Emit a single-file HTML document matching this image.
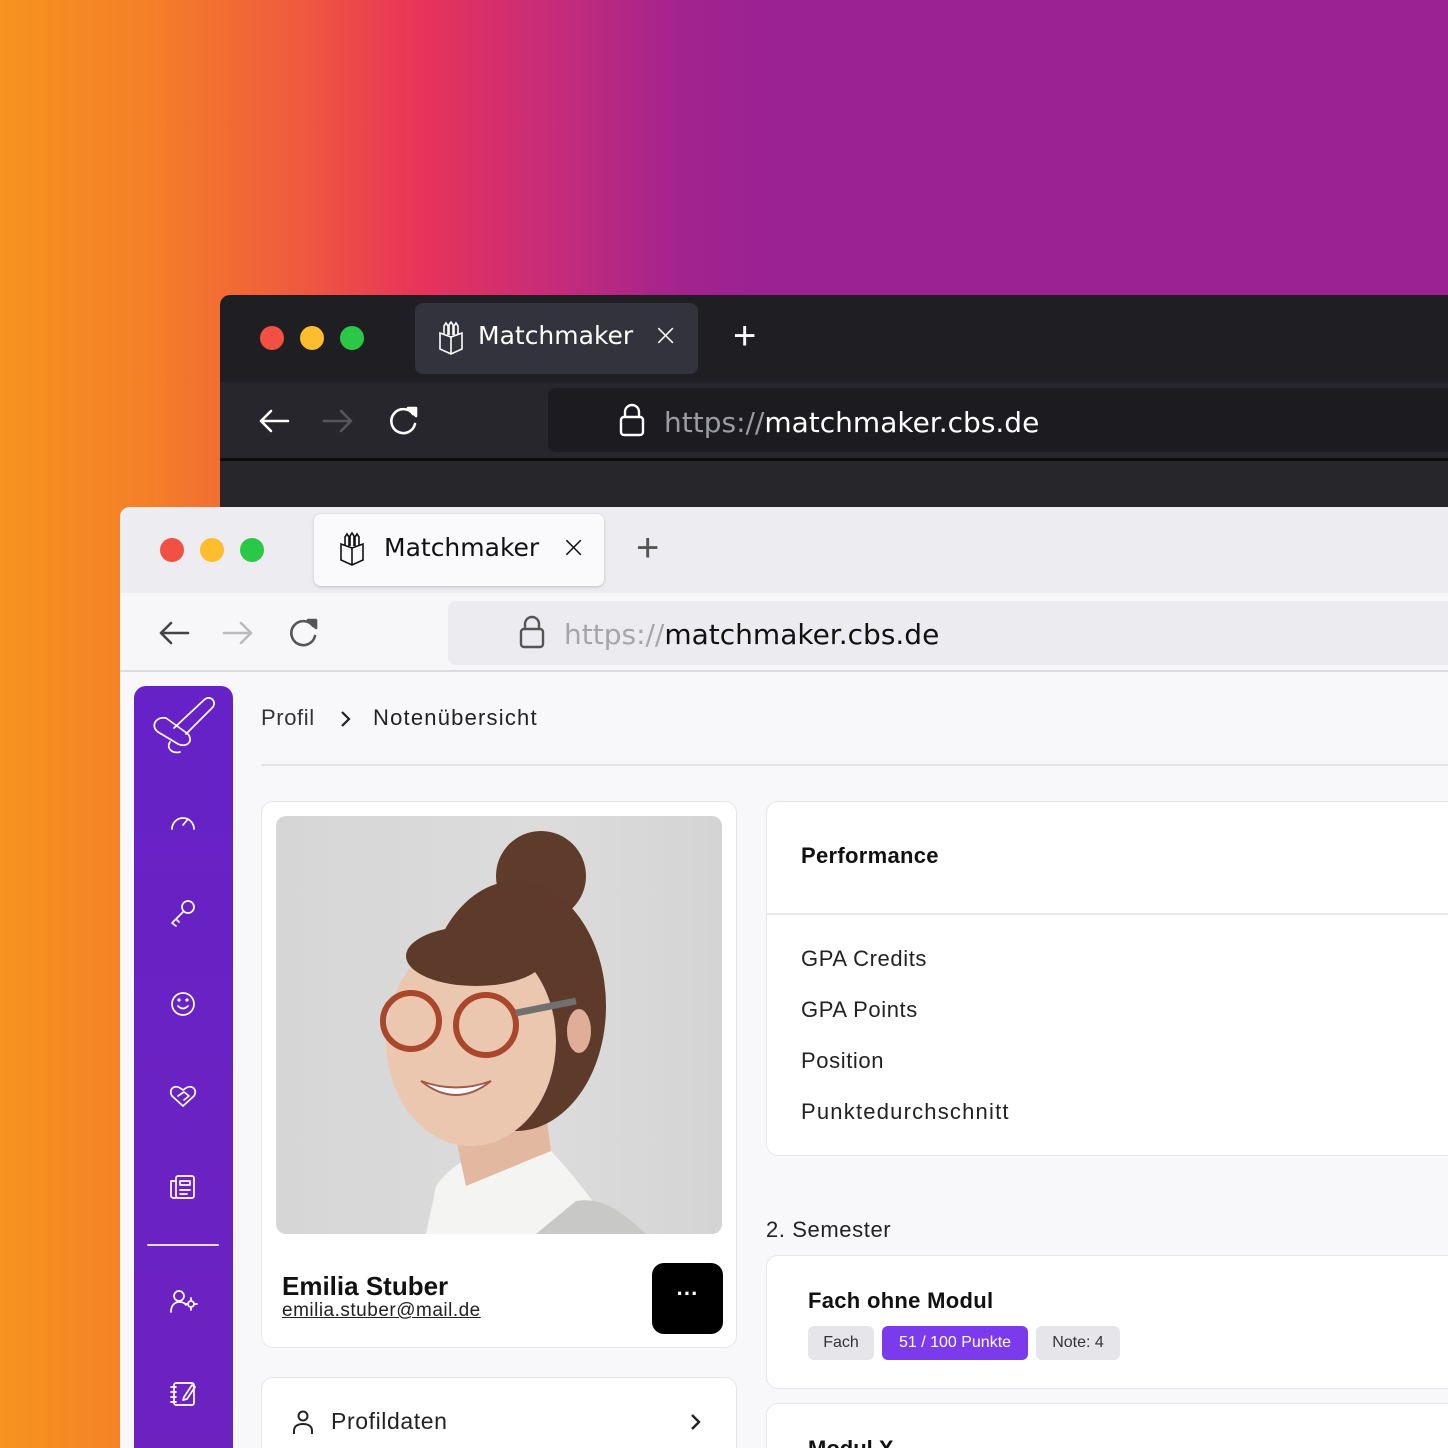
<!DOCTYPE html>
<html style="width:1448px;height:1448px;overflow:hidden"><head><meta charset="utf-8"><style>
*{margin:0;padding:0;box-sizing:border-box}
html,body{width:1448px;height:1448px;overflow:hidden}
body{font-family:"Liberation Sans",sans-serif}
#w{position:absolute;left:0;top:0;width:1448px;height:1448px;overflow:hidden;background:linear-gradient(90deg,#f7931e 0px,#f47f28 150px,#ef5a3e 300px,#e8335a 420px,#c42c7a 560px,#a3238e 680px,#9b2293 760px,#9b2293 1448px)}
.abs{position:absolute}
.dot{position:absolute;width:24px;height:24px;border-radius:50%}
.t{position:absolute;white-space:nowrap}
.card{position:absolute;background:#fff;border:1.5px solid #e7e7eb;border-radius:12px}
.tag{position:absolute;height:34px;border-radius:6px;background:#e6e6ea;font-size:16px;line-height:34px;text-align:center;color:#333}
.ls{letter-spacing:.6px}
</style></head><body><div id="w">
<div class="abs" style="left:220px;top:295px;width:1240px;height:220px;background:#1e1e23;border-radius:10px 0 0 0"></div>
<div class="abs" style="left:220px;top:382px;width:1240px;height:76px;background:#26262c"></div>
<div class="abs" style="left:220px;top:458px;width:1240px;height:3px;background:#0d0d10"></div>
<div class="abs" style="left:220px;top:461px;width:1240px;height:50px;background:#26262b"></div>
<div class="dot" style="left:260px;top:326px;background:#f25042"></div>
<div class="dot" style="left:300px;top:326px;background:#fdbd2e"></div>
<div class="dot" style="left:340px;top:326px;background:#2ac846"></div>
<div class="abs" style="left:415px;top:303px;width:283px;height:71px;background:#33333d;border-radius:8px"></div>
<svg class="abs" style="left:437px;top:321px" width="28" height="34" viewBox="0 0 28 34" fill="none" stroke="#fff" stroke-width="1.6"><path d="M3 12 L14 16 L25 12 L25 28 L14 33 L3 28 Z M14 16 V33"/><path d="M7 13 V5 L9 2 L11 5 V14 M12 14 V4 L14 1 L16 4 V14 M17 14 V5 L19 2 L21 5 V13"/></svg>
<div class="t" style="left:478px;top:321px;font-size:25px;color:#fff;font-family:'DejaVu Sans',sans-serif">Matchmaker</div>
<div class="t" style="left:653px;top:318px;font-size:30px;color:#fff;font-family:'DejaVu Sans',sans-serif;font-weight:200">×</div>
<div class="t" style="left:733px;top:314px;font-size:40px;color:#fff;font-weight:300">+</div>
<svg class="abs" style="left:256px;top:404px" width="180" height="36" fill="none" stroke-width="2.6" stroke-linecap="round" stroke-linejoin="round"><path d="M32 17 H5 M15 7 L5 17 L15 27" stroke="#fff"/><path d="M68 17 H95 M85 7 L95 17 L85 27" stroke="#55555c"/><path d="M157 10 A12 12 0 1 0 159 20" stroke="#fff"/><path d="M152 4 L160 4 L160 12 Z" fill="#fff" stroke="#fff"/></svg>
<div class="abs" style="left:548px;top:388px;width:920px;height:64px;background:#1b1b20;border-radius:8px"></div>
<svg class="abs" style="left:618px;top:403px" width="28" height="34" fill="none" stroke="#fff" stroke-width="2.4"><rect x="3" y="14" width="22" height="18" rx="3"/><path d="M7 14 V9 A7 7 0 0 1 21 9 V14"/></svg>
<div class="t" style="left:664px;top:406px;font-size:28px;color:#fff;font-family:'DejaVu Sans',sans-serif"><span style="color:#9b9ba2">https://</span>matchmaker.cbs.de</div>

<div class="abs" style="left:120px;top:507px;width:1340px;height:950px;background:#f8f8fa;border-radius:10px 0 0 0"></div>
<div class="abs" style="left:120px;top:507px;width:1340px;height:86px;background:#ededf1;border-radius:10px 0 0 0"></div>
<div class="abs" style="left:120px;top:593px;width:1340px;height:78px;background:#f7f7f9"></div>
<div class="abs" style="left:120px;top:670px;width:1340px;height:2px;background:#dcdce0"></div>
<div class="dot" style="left:160px;top:538px;background:#f25042"></div>
<div class="dot" style="left:200px;top:538px;background:#fdbd2e"></div>
<div class="dot" style="left:240px;top:538px;background:#2ac846"></div>
<div class="abs" style="left:314px;top:514px;width:290px;height:72px;background:#fafafc;border-radius:7px;box-shadow:0 1px 3px rgba(0,0,0,.2)"></div>
<svg class="abs" style="left:338px;top:532px" width="28" height="34" viewBox="0 0 28 34" fill="none" stroke="#111" stroke-width="1.6"><path d="M3 12 L14 16 L25 12 L25 28 L14 33 L3 28 Z M14 16 V33"/><path d="M7 13 V5 L9 2 L11 5 V14 M12 14 V4 L14 1 L16 4 V14 M17 14 V5 L19 2 L21 5 V13"/></svg>
<div class="t" style="left:384px;top:533px;font-size:25px;color:#111;font-family:'DejaVu Sans',sans-serif">Matchmaker</div>
<div class="t" style="left:561px;top:530px;font-size:30px;color:#111;font-family:'DejaVu Sans',sans-serif;font-weight:200">×</div>
<div class="t" style="left:636px;top:526px;font-size:40px;color:#555;font-weight:300">+</div>
<svg class="abs" style="left:156px;top:616px" width="180" height="36" fill="none" stroke-width="2.6" stroke-linecap="round" stroke-linejoin="round"><path d="M32 17 H5 M15 7 L5 17 L15 27" stroke="#444"/><path d="M68 17 H95 M85 7 L95 17 L85 27" stroke="#bbb"/><path d="M157 10 A12 12 0 1 0 159 20" stroke="#555"/><path d="M152 4 L160 4 L160 12 Z" fill="#555" stroke="#555"/></svg>
<div class="abs" style="left:448px;top:601px;width:1010px;height:64px;background:#ececf0;border-radius:8px"></div>
<svg class="abs" style="left:518px;top:615px" width="28" height="34" fill="none" stroke="#555" stroke-width="2.4"><rect x="3" y="14" width="22" height="18" rx="3"/><path d="M7 14 V9 A7 7 0 0 1 21 9 V14"/></svg>
<div class="t" style="left:564px;top:618px;font-size:28px;color:#111;font-family:'DejaVu Sans',sans-serif"><span style="color:#a5a5aa">https://</span>matchmaker.cbs.de</div>

<div class="abs" style="left:134px;top:686px;width:99px;height:780px;background:linear-gradient(180deg,#6622c6,#6d22c0);border-radius:12px 12px 0 0"></div>
<svg class="abs" style="left:134px;top:686px" width="99" height="762" fill="none" stroke="#fff" stroke-width="1.7" stroke-linecap="round" stroke-linejoin="round">
<path d="M32 32 C22 30 16 40 24 46 L44 58 C52 62 60 56 54 48 Z"/><path d="M40 42 L70 14 C76 8 84 16 78 22 L52 48"/><path d="M36 56 C32 62 38 68 46 66"/>
<path d="M38 143 A11 11 0 1 1 60 143 M49 139 L54 133"/>
<circle cx="54" cy="221" r="6"/><path d="M49 226 L38 237 L42 240 M42 233 L45 236"/>
<circle cx="49" cy="318" r="11"/><path d="M44 320 Q49 325 54 320"/><circle cx="45" cy="314" r=".8"/><circle cx="53" cy="314" r=".8"/>
<path d="M49 420 L38 410 C34 404 40 398 46 402 L49 404 L52 402 C58 398 64 404 60 410 Z"/><path d="M44 410 L50 406 L55 410 L50 414"/>
<rect x="42" y="490" width="18" height="22" rx="2"/><path d="M42 495 H37 V510 C37 512 40 512 42 512 M46 495 H56 V499 H46 Z M46 504 H56 M46 508 H53"/>
<path d="M14 559 H84" stroke="#e6dcf8" stroke-width="2"/>
<circle cx="45" cy="610" r="5"/><path d="M37 626 C37 618 42 616 45 616 C48 616 51 617 52 619"/><circle cx="57" cy="618" r="3"/><path d="M57 612 V614 M57 622 V624 M51 618 H53 M61 618 H63"/>
<rect x="40" y="697" width="20" height="22" rx="2"/><path d="M37 701 H42 M37 706 H42 M37 711 H42 M37 716 H42 M50 711 L58 699 L61 701 L53 713 L49 714 Z"/>
</svg>

<div class="t ls" style="left:261px;top:705px;font-size:22px;color:#333">Profil</div>
<svg class="abs" style="left:338px;top:709px" width="14" height="20" fill="none" stroke="#222" stroke-width="2.2"><path d="M4 3 L11 10 L4 17"/></svg>
<div class="t ls" style="left:373px;top:705px;font-size:22px;color:#222;letter-spacing:1.2px">Notenübersicht</div>
<div class="abs" style="left:261px;top:764px;width:1200px;height:2px;background:#e4e4e8"></div>

<div class="card" style="left:261px;top:801px;width:476px;height:547px"></div>
<div class="abs" style="left:276px;top:816px;width:446px;height:418px;border-radius:10px;overflow:hidden;background:linear-gradient(90deg,#d6d6d6,#dcdcdc 60%,#d4d4d4)">
<svg width="446" height="418" viewBox="0 0 446 418">
<path d="M150 418 L160 370 C180 340 230 320 270 330 C300 360 320 390 340 418 Z" fill="#f4f4f2"/>
<path d="M260 418 L300 385 C330 380 350 400 370 418 Z" fill="#c8c8c6"/>
<path d="M175 300 L190 370 C215 360 250 345 275 335 L265 260 Z" fill="#e3b8a0"/>
<ellipse cx="265" cy="60" rx="45" ry="45" fill="#5f3b2c"/>
<ellipse cx="240" cy="190" rx="90" ry="125" fill="#5e3a2a"/>
<ellipse cx="195" cy="225" rx="85" ry="105" fill="#ecc7b0"/>
<ellipse cx="200" cy="140" rx="70" ry="30" fill="#5e3a2a"/>
<circle cx="135" cy="205" r="28" fill="none" stroke="#a9472c" stroke-width="6"/>
<circle cx="210" cy="209" r="30" fill="none" stroke="#a9472c" stroke-width="6"/>
<path d="M240 197 L300 185" stroke="#707070" stroke-width="7"/>
<path d="M145 265 Q180 293 215 265 Q180 278 145 265 Z" fill="#fff" stroke="#a05a4a" stroke-width="2"/>
<ellipse cx="303" cy="215" rx="12" ry="22" fill="#dfae98"/>
</svg></div>
<div class="t" style="left:282px;top:1271px;font-size:26px;font-weight:bold;color:#111">Emilia Stuber</div>
<div class="t" style="left:282px;top:1300px;font-size:19px;color:#222;text-decoration:underline;letter-spacing:.5px">emilia.stuber@mail.de</div>
<div class="abs" style="left:652px;top:1263px;width:71px;height:71px;background:#000;border-radius:12px;color:#fff;font-size:22px;text-align:center;line-height:62px;font-weight:bold">···</div>

<div class="card" style="left:261px;top:1377px;width:476px;height:100px"></div>
<svg class="abs" style="left:290px;top:1409px" width="26" height="26" fill="none" stroke="#222" stroke-width="2"><circle cx="13" cy="7" r="4.5"/><path d="M4 25 V22 C4 17 8 15 13 15 C18 15 22 17 22 22 V25"/></svg>
<div class="t ls" style="left:331px;top:1408px;font-size:23px;color:#222">Profildaten</div>
<svg class="abs" style="left:688px;top:1412px" width="14" height="20" fill="none" stroke="#222" stroke-width="2.4"><path d="M4 3 L11 10 L4 17"/></svg>

<div class="card" style="left:766px;top:801px;width:700px;height:355px"></div>
<div class="abs" style="left:767px;top:913px;width:700px;height:2px;background:#e7e7eb"></div>
<div class="t" style="left:801px;top:843px;font-size:22px;font-weight:bold;color:#111;letter-spacing:.3px">Performance</div>
<div class="t ls" style="left:801px;top:946px;font-size:22px;color:#222">GPA Credits</div>
<div class="t ls" style="left:801px;top:997px;font-size:22px;color:#222">GPA Points</div>
<div class="t ls" style="left:801px;top:1048px;font-size:22px;color:#222">Position</div>
<div class="t" style="left:801px;top:1099px;font-size:22px;color:#222;letter-spacing:1.2px">Punktedurchschnitt</div>

<div class="t ls" style="left:766px;top:1217px;font-size:22px;color:#222">2. Semester</div>
<div class="card" style="left:766px;top:1255px;width:700px;height:134px"></div>
<div class="t" style="left:808px;top:1288px;font-size:22px;font-weight:bold;color:#111;letter-spacing:.3px">Fach ohne Modul</div>
<div class="tag" style="left:808px;top:1326px;width:66px">Fach</div>
<div class="tag" style="left:882px;top:1326px;width:146px;background:#7c3aed;color:#fff">51 / 100 Punkte</div>
<div class="tag" style="left:1036px;top:1326px;width:84px">Note: 4</div>
<div class="card" style="left:766px;top:1403px;width:700px;height:100px"></div>
<div class="t" style="left:808px;top:1436px;font-size:22px;font-weight:bold;color:#111">Modul X</div>
</div></body></html>
